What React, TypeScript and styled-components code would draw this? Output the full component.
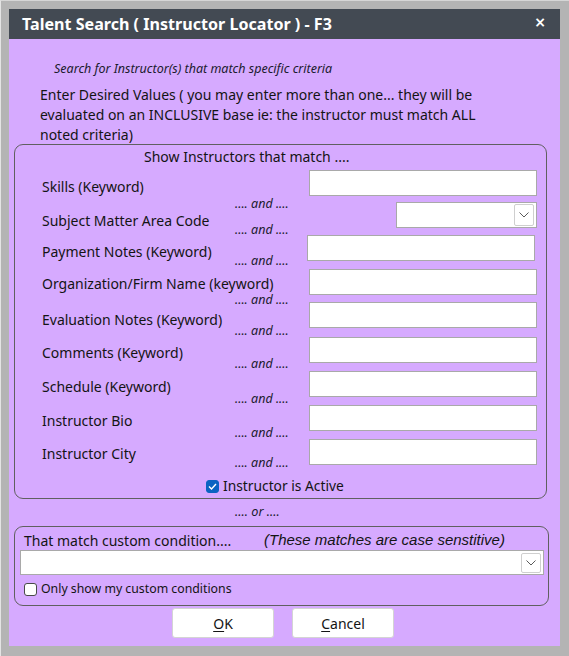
import React from 'react';
import styled, { createGlobalStyle } from 'styled-components';

const Global = createGlobalStyle`
  html, body { margin: 0; padding: 0; background: #b4b4b4; }
  body { font-family: "Noto Sans", "Open Sans", sans-serif; color: #141414; }
  * { box-sizing: border-box; }
`;

const Window = styled.div`
  width: 569px;
  height: 656px;
  background: #b4b4b4;
  border-top: 1px solid #d6d6d6;
  border-left: 1px solid #e4e4e4;
  padding: 8px 9px 10px 8px;
  display: flex;
  flex-direction: column;
`;

const TitleBar = styled.div`
  height: 30px;
  flex: none;
  background: #434a53;
  display: flex;
  align-items: center;
  justify-content: space-between;
  padding: 0 14px 0 13px;
`;

const TitleText = styled.span`
  color: #ffffff;
  font-weight: 700;
  font-size: 16.1px;
  line-height: 20px;
`;

const CloseGlyph = styled.span`
  color: #ffffff;
  font-family: "DejaVu Sans", sans-serif;
  font-weight: 700;
  font-size: 14px;
  line-height: 1;
  margin-top: -4px;
`;

const Body = styled.div`
  flex: 1;
  background: #d6aaff;
  display: flex;
  flex-direction: column;
  align-items: flex-start;
`;

const Subtitle = styled.div`
  margin: 22px 0 0 45px;
  font-size: 12.5px;
  font-style: italic;
  line-height: 16px;
  color: #1b1b2e;
`;

const Intro = styled.p`
  margin: 8px 0 0 31px;
  font-size: 14px;
  line-height: 20px;
`;

const GroupBox = styled.div<{ $w: number; $h: number; $ml: number; $mt: number }>`
  width: ${p => p.$w}px;
  height: ${p => p.$h}px;
  margin: ${p => p.$mt}px 0 0 ${p => p.$ml}px;
  border: 1px solid #606060;
  border-radius: 9px;
  display: flex;
  flex-direction: column;
  align-items: flex-start;
`;

const BoxTitle = styled.div`
  margin: 3px 0 0 129px;
  font-size: 14px;
  line-height: 18px;
`;

const Rows = styled.div`
  margin-top: 4px;
  display: flex;
  flex-direction: column;
`;

const Row = styled.div<{ $h: number }>`
  height: ${p => p.$h}px;
  display: flex;
  align-items: flex-start;
  padding-left: 27px;
`;

const LabelCol = styled.div`
  width: 267px;
  flex: none;
  display: flex;
  flex-direction: column;
`;

const Label = styled.div<{ $mt: number }>`
  margin-top: ${p => p.$mt}px;
  font-size: 14px;
  line-height: 16px;
  white-space: nowrap;
`;

const AndText = styled.div<{ $mt: number }>`
  margin: ${p => p.$mt}px 0 0 193px;
  font-size: 12.5px;
  font-style: italic;
  line-height: 12px;
  white-space: nowrap;
  color: #1b1b2e;
`;

const TextBox = styled.div<{ $shift: number }>`
  width: 228px;
  height: 26px;
  margin-left: ${p => p.$shift}px;
  background: #ffffff;
  border: 1px solid #a9a9a9;
`;

const Combo = styled.div<{ $w: number; $h: number; $shift: number }>`
  width: ${p => p.$w}px;
  height: ${p => p.$h}px;
  margin-left: ${p => p.$shift}px;
  background: #ffffff;
  border: 1px solid #a9a9a9;
  display: flex;
  justify-content: flex-end;
  align-items: center;
  padding-right: 2px;
`;

const ComboButton = styled.div<{ $h: number }>`
  width: 20px;
  height: ${p => p.$h}px;
  border: 1px solid #cfcfcf;
  border-radius: 2px;
  display: flex;
  align-items: center;
  justify-content: center;
`;

const CheckRow = styled.label<{ $ml: number; $mt: number }>`
  margin: ${p => p.$mt}px 0 0 ${p => p.$ml}px;
  display: flex;
  align-items: center;
  gap: 4px;
  line-height: 18px;
  white-space: nowrap;
`;

const CheckBox = styled.span<{ $checked?: boolean }>`
  width: 13px;
  height: 13px;
  flex: none;
  border-radius: 3px;
  display: flex;
  align-items: center;
  justify-content: center;
  background: ${p => (p.$checked ? '#0a63c2' : '#ffffff')};
  border: 1px solid ${p => (p.$checked ? '#0a63c2' : '#4a4a4a')};
`;

const CheckText = styled.span<{ $size: number }>`
  font-size: ${p => p.$size}px;
`;

const OrText = styled.div`
  margin: 5px 0 0 226px;
  font-size: 12.7px;
  font-style: italic;
  line-height: 14px;
  color: #1b1b2e;
`;

const CustomHead = styled.div`
  margin: 5px 0 0 9px;
  display: flex;
  align-items: center;
  height: 18px;
`;

const CustomTitle = styled.span`
  width: 240px;
  font-size: 14px;
  line-height: 18px;
`;

const CustomNote = styled.span`
  font-family: "Liberation Sans", Arial, sans-serif;
  font-style: italic;
  font-size: 15px;
  line-height: 18px;
  margin-top: -3px;
`;

const ButtonRow = styled.div`
  margin: 2px 0 0 163px;
  display: flex;
  gap: 18px;
`;

const Button = styled.button`
  width: 102px;
  height: 30px;
  background: #ffffff;
  border: 1px solid #d4d4d4;
  border-radius: 3px;
  font-family: "Noto Sans", sans-serif;
  font-size: 14px;
  color: #141414;
  padding: 0;
  display: flex;
  align-items: center;
  justify-content: center;
`;

const Key = styled.span`
  text-decoration: underline;
  text-underline-offset: 2px;
`;

const Chevron = () => (
  <svg width="10" height="6" viewBox="0 0 10 6">
    <polyline points="0.5,0.5 5,5 9.5,0.5" fill="none" stroke="#5a5a5a" strokeWidth="1" />
  </svg>
);

const Tick = () => (
  <svg width="9" height="7" viewBox="0 0 9 7">
    <polyline points="1,3.5 3.5,6 8,1" fill="none" stroke="#ffffff" strokeWidth="1.4" />
  </svg>
);

type Field = {
  label: string;
  top: number;
  h: number;
  labelC: number;
  andC: number;
  shift?: number;
  combo?: boolean;
};

const fields: Field[] = [
  { label: 'Skills (Keyword)', top: 170, h: 32, labelC: 187, andC: 204 },
  { label: 'Subject Matter Area Code', top: 202, h: 33, labelC: 221, andC: 230, shift: 87, combo: true },
  { label: 'Payment Notes (Keyword)', top: 235, h: 34, labelC: 252, andC: 261, shift: -2 },
  { label: 'Organization/Firm Name (keyword)', top: 269, h: 33, labelC: 284, andC: 300 },
  { label: 'Evaluation Notes (Keyword)', top: 302, h: 35, labelC: 320, andC: 331 },
  { label: 'Comments (Keyword)', top: 337, h: 34, labelC: 353, andC: 364 },
  { label: 'Schedule (Keyword)', top: 371, h: 34, labelC: 387, andC: 399 },
  { label: 'Instructor Bio', top: 405, h: 34, labelC: 421, andC: 433 },
  { label: 'Instructor City', top: 439, h: 38, labelC: 454, andC: 463 },
];

export default function App() {
  return (
    <>
      <Global />
      <Window>
        <TitleBar>
          <TitleText>Talent Search ( Instructor Locator ) - F3</TitleText>
          <CloseGlyph>×</CloseGlyph>
        </TitleBar>
        <Body>
          <Subtitle>Search for Instructor(s) that match specific criteria</Subtitle>
          <Intro>
            Enter Desired Values ( you may enter more than one... they will be
            <br />
            evaluated on an INCLUSIVE base ie: the instructor must match ALL
            <br />
            noted criteria)
          </Intro>
          <GroupBox $w={533} $h={355} $ml={5} $mt={-1}>
            <BoxTitle>Show Instructors that match ....</BoxTitle>
            <Rows>
              {fields.map(f => (
                <Row key={f.label} $h={f.h}>
                  <LabelCol>
                    <Label $mt={f.labelC - 8 - f.top}>{f.label}</Label>
                    <AndText $mt={f.andC - 6 - (f.labelC + 8)}>.... and ....</AndText>
                  </LabelCol>
                  {f.combo ? (
                    <Combo $w={141} $h={26} $shift={f.shift ?? 0}>
                      <ComboButton $h={22}>
                        <Chevron />
                      </ComboButton>
                    </Combo>
                  ) : (
                    <TextBox $shift={f.shift ?? 0} />
                  )}
                </Row>
              ))}
            </Rows>
            <CheckRow $ml={191} $mt={0}>
              <CheckBox $checked>
                <Tick />
              </CheckBox>
              <CheckText $size={13.8}>Instructor is Active</CheckText>
            </CheckRow>
          </GroupBox>
          <OrText>.... or ....</OrText>
          <GroupBox $w={535} $h={80} $ml={5} $mt={8}>
            <CustomHead>
              <CustomTitle>That match custom condition....</CustomTitle>
              <CustomNote>(These matches are case senstitive)</CustomNote>
            </CustomHead>
            <Combo $w={524} $h={25} $shift={5}>
              <ComboButton $h={20}>
                <Chevron />
              </ComboButton>
            </Combo>
            <CheckRow $ml={9} $mt={5}>
              <CheckBox />
              <CheckText $size={12.3}>Only show my custom conditions</CheckText>
            </CheckRow>
          </GroupBox>
          <ButtonRow>
            <Button>
              <Key>O</Key>K
            </Button>
            <Button>
              <Key>C</Key>ancel
            </Button>
          </ButtonRow>
        </Body>
      </Window>
    </>
  );
}
